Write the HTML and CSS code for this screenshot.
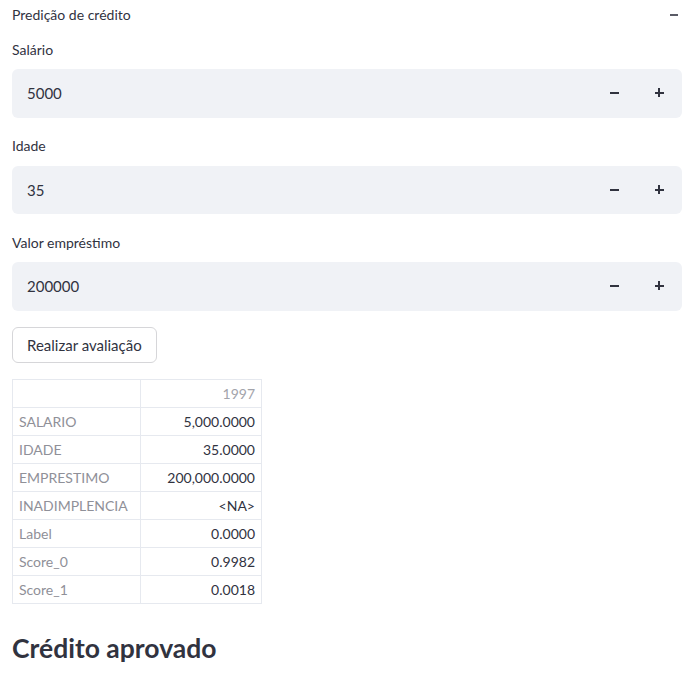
FILE: index.html
```html
<!DOCTYPE html>
<html lang="pt">
<head>
<meta charset="utf-8">
<link rel="stylesheet" href="styles.css">
</head>
<body>
<div class="page">
  <div class="expander-head">
    <span>Predição de crédito</span>
    <span class="collapse"></span>
  </div>
  <div class="field">
    <label class="label">Salário</label>
    <div class="num-input">
      <span class="value">5000</span>
      <span class="step minus"></span>
      <span class="step plus"></span>
    </div>
  </div>
  <div class="field">
    <label class="label">Idade</label>
    <div class="num-input">
      <span class="value">35</span>
      <span class="step minus"></span>
      <span class="step plus"></span>
    </div>
  </div>
  <div class="field">
    <label class="label">Valor empréstimo</label>
    <div class="num-input">
      <span class="value">200000</span>
      <span class="step minus"></span>
      <span class="step plus"></span>
    </div>
  </div>
  <button class="btn">Realizar avaliação</button>
  <table class="df">
    <tr><th></th><td class="hdr">1997</td></tr>
    <tr><th>SALARIO</th><td>5,000.0000</td></tr>
    <tr><th>IDADE</th><td>35.0000</td></tr>
    <tr><th>EMPRESTIMO</th><td>200,000.0000</td></tr>
    <tr><th>INADIMPLENCIA</th><td class="na">&lt;NA&gt;</td></tr>
    <tr><th>Label</th><td>0.0000</td></tr>
    <tr><th>Score_0</th><td>0.9982</td></tr>
    <tr><th>Score_1</th><td>0.0018</td></tr>
  </table>
  <h2 class="result">Crédito aprovado</h2>
</div>
</body>
</html>
```
FILE: styles.css
```css
* { box-sizing: border-box; }
body {
  margin: 0;
  background: #fff;
  color: #31333f;
  font-family: "Lato", "Noto Sans", sans-serif;
}
.page {
  padding: 0 13px 0 12px;
  display: flex;
  flex-direction: column;
  align-items: flex-start;
}
.expander-head {
  width: 100%;
  height: 29px;
  display: flex;
  justify-content: space-between;
  align-items: center;
  font-size: 14px;
  padding-right: 4px;
}
.collapse {
  width: 8px;
  height: 2px;
  background: #5a5b66;
}
.field {
  width: 100%;
  display: flex;
  flex-direction: column;
}
.label {
  height: 40px;
  display: flex;
  align-items: center;
  font-size: 14px;
}
.num-input {
  height: 48.5px;
  background: #f0f2f6;
  border-radius: 6px;
  display: flex;
  align-items: center;
  padding-left: 15px;
  margin-bottom: 8px;
}
.value {
  flex: 1;
  font-size: 15px;
}
.step {
  width: 45px;
  height: 48px;
  position: relative;
}
.step::before, .plus::after {
  content: "";
  position: absolute;
  left: 50%;
  top: 50%;
  background: #31333f;
}
.step::before {
  width: 9px;
  height: 2px;
  margin: -1px 0 0 -5px;
}
.plus::after {
  width: 2px;
  height: 9px;
  margin: -5px 0 0 -2px;
}
.btn {
  margin-top: 8px;
  height: 36px;
  padding: 0 14px;
  border: 1px solid #d6d6d9;
  border-radius: 6px;
  background: #fff;
  color: #31333f;
  font-family: inherit;
  font-size: 15px;
}
.df {
  margin-top: 16px;
  border-collapse: collapse;
  font-size: 14px;
  width: 250px;
}
.df th, .df td {
  border: 1px solid #e6e9ef;
  height: 28px;
  padding: 0 6px;
}
.df th {
  font-weight: 400;
  color: #8f9098;
  text-align: left;
  width: 128px;
}
.df td {
  text-align: right;
  color: #31333f;
}
.df td.hdr { color: #a3a4ab; }
.result {
  margin: 28px 0 0;
  font-size: 26.5px;
  font-weight: 700;
  color: #31333f;
}
```
